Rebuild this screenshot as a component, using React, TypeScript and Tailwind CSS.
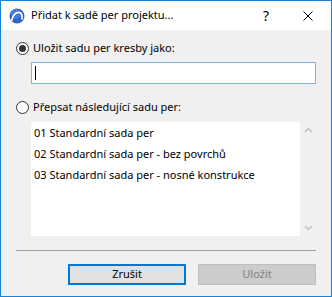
function AppIcon() {
  return (
    <svg width="16" height="16" viewBox="0 0 16 16">
      <circle cx="8" cy="8" r="7.5" fill="#2f62c4" />
      <circle cx="7" cy="6" r="5" fill="#5b8ee0" opacity="0.6" />
      <path d="M2.5 13 C3.5 6.5 8 3.5 11 4.8 C13 5.8 13.4 8.5 12.8 11.5" fill="none" stroke="#fff" strokeWidth="1.7" />
    </svg>
  );
}

function Radio({ checked }: { checked?: boolean }) {
  return (
    <span className="w-[13px] h-[13px] rounded-full border border-[#333] bg-white flex items-center justify-center shrink-0">
      {checked && <span className="w-[7px] h-[7px] rounded-full bg-[#333]" />}
    </span>
  );
}

const items = [
  '01 Standardní sada per',
  '02 Standardní sada per - bez povrchů',
  '03 Standardní sada per - nosné konstrukce',
];

export default function App() {
  return (
    <div
      className="w-[332px] h-[297px] border border-[#1883d7] flex flex-col bg-[#f0f0f0] text-[11px] text-black"
      style={{ fontFamily: '"Noto Sans", "Open Sans", sans-serif' }}
    >
      <div className="h-[29px] bg-white flex items-center shrink-0">
        <div className="ml-[8px] mr-[6px]">
          <AppIcon />
        </div>
        <span>Přidat k sadě per projektu...</span>
        <span className="ml-auto mr-[34px] text-[14px]">?</span>
        <svg width="10" height="10" viewBox="0 0 10 10" className="mr-[18px]">
          <path d="M0.5 0.5 L9.5 9.5 M9.5 0.5 L0.5 9.5" stroke="#000" strokeWidth="1" />
        </svg>
      </div>

      <div className="flex-1 flex flex-col px-[15px] pt-[11px]">
        <label className="flex items-center h-[14px] gap-[4px]">
          <Radio checked />
          <span>Uložit sadu per kresby jako:</span>
        </label>
        <div className="ml-[15px] mt-[7px] h-[22px] bg-white border border-[#7eb4ea] flex items-center pl-[3px]">
          <span className="w-px h-[14px] bg-black" />
        </div>

        <label className="flex items-center h-[14px] gap-[4px] mt-[16px]">
          <Radio />
          <span>Přepsat následující sadu per:</span>
        </label>
        <div className="ml-[15px] mt-[8px] h-[114px] flex">
          <div className="flex-1 bg-white pt-[1px]">
            {items.map((t) => (
              <div key={t} className="h-[21px] flex items-center pl-[3px]">
                {t}
              </div>
            ))}
          </div>
          <div className="w-[16px] flex flex-col items-center justify-between py-[5px]">
            <svg width="9" height="6" viewBox="0 0 9 6">
              <path d="M1 5 L4.5 1.5 L8 5" fill="none" stroke="#c0c0c0" strokeWidth="1.5" />
            </svg>
            <svg width="9" height="6" viewBox="0 0 9 6">
              <path d="M1 1 L4.5 4.5 L8 1" fill="none" stroke="#c0c0c0" strokeWidth="1.5" />
            </svg>
          </div>
        </div>

        <div className="mt-[14px] h-px bg-[#a0a0a0]" />

        <div className="mt-[13px] flex justify-end gap-[12px]">
          <button className="w-[118px] h-[21px] border-2 border-[#0078d7] bg-[#e1e1e1] flex items-center justify-center">
            Zrušit
          </button>
          <button className="w-[118px] h-[21px] border border-[#bfbfbf] bg-[#cccccc] text-[#838383] flex items-center justify-center">
            Uložit
          </button>
        </div>
      </div>
    </div>
  );
}
